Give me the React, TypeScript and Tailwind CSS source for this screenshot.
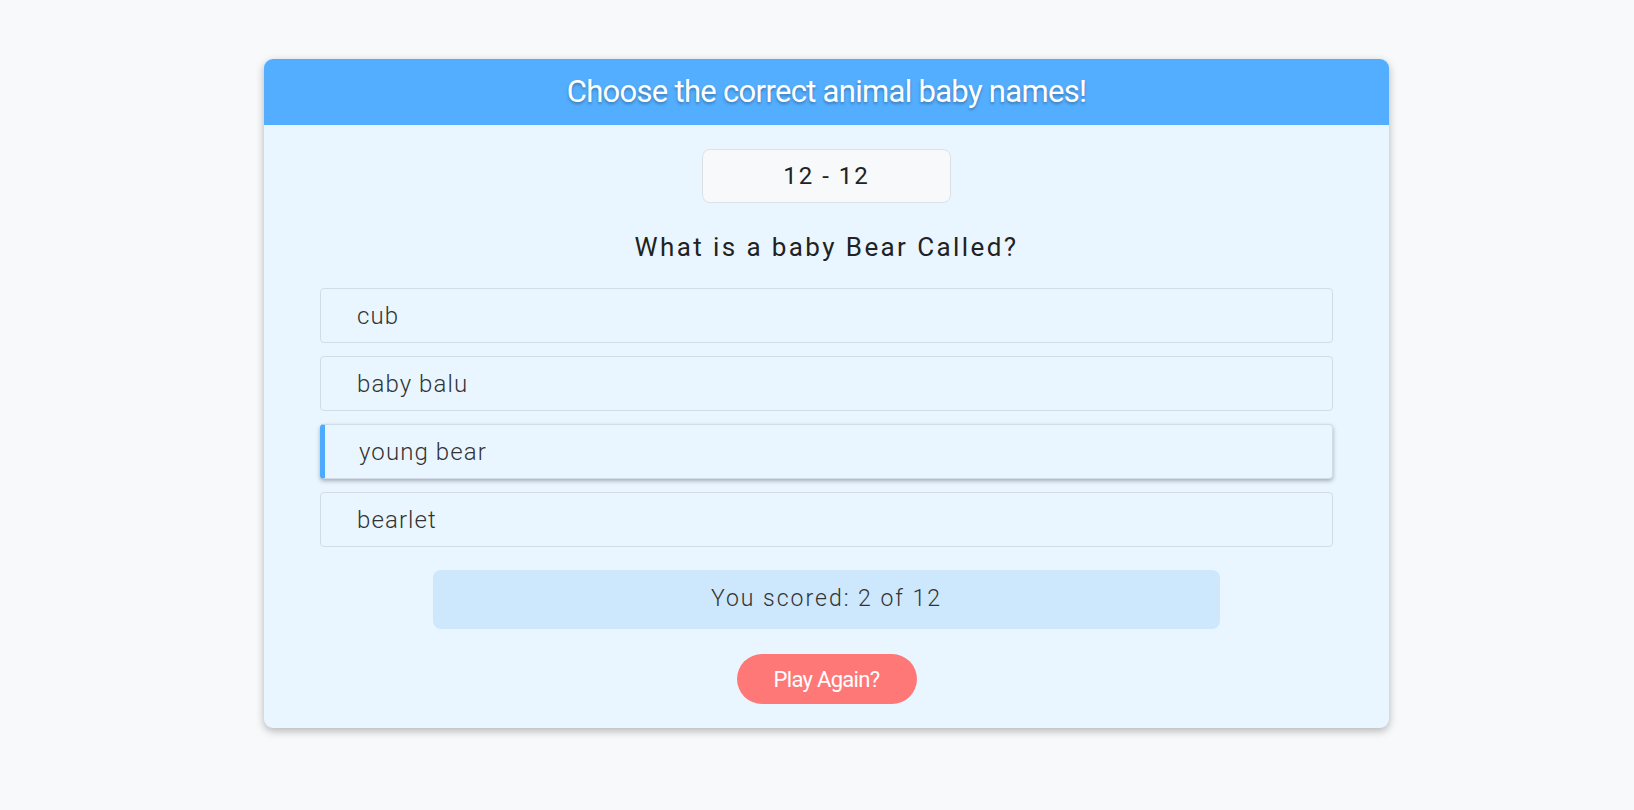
import { useState } from 'react';

const options = ['cub', 'baby balu', 'young bear', 'bearlet'];

export default function App() {
  const [selected, setSelected] = useState(2);

  return (
    <div className="min-h-screen bg-[#f8f9fb] pt-[59px] font-['Roboto',sans-serif]">
      <div className="ml-[264px] w-[1125px] overflow-hidden rounded-[9px] bg-[#eaf6ff] shadow-[0_3px_8px_rgba(0,0,0,0.28)]">
        <div className="flex h-[66px] items-center justify-center bg-[#54aeff]">
          <h1 className="text-[31px] tracking-[-0.7px] text-white [text-shadow:0_2px_3px_rgba(0,0,0,0.3)]">
            Choose the correct animal baby names!
          </h1>
        </div>

        <div className="flex flex-col items-center px-[56px] pb-[24px] pt-[24px]">
          <div className="flex h-[54px] w-[249px] items-center justify-center rounded-[8px] border border-[#dcdfe3] bg-[#f7f9fb] text-[24px] tracking-[2px] text-[#222]">
            12 - 12
          </div>

          <h2 className="mt-[28px] text-[26px] leading-[32px] tracking-[2.4px] text-[#222]">
            What is a baby Bear Called?
          </h2>

          <ul className="mt-[25px] flex w-full flex-col gap-[13px]">
            {options.map((opt, i) => (
              <li
                key={opt}
                onClick={() => setSelected(i)}
                className={
                  i === selected
                    ? 'flex h-[55px] cursor-pointer items-center rounded-[4px] border border-l-[5px] border-[#d3dce6] border-l-[#4eaaff] bg-[#eaf6ff] pl-[34px] text-[24px] font-light tracking-[1.1px] text-[#333] shadow-[0_2px_4px_rgba(0,0,0,0.3)]'
                    : 'flex h-[55px] cursor-pointer items-center rounded-[4px] border border-[#d3dce6] bg-[#eaf6ff] pl-[36px] text-[24px] font-light tracking-[1.1px] text-[#333]'
                }
              >
                {opt}
              </li>
            ))}
          </ul>

          <div className="mt-[23px] flex h-[59px] w-[787px] items-center justify-center rounded-[8px] bg-[#cde7fd] text-[23px] font-light tracking-[2px] text-[#333]">
            You scored: 2 of 12
          </div>

          <button className="mt-[25px] h-[50px] w-[180px] rounded-full bg-[#ff7878] text-[22px] tracking-[-0.7px] text-white">
            Play Again?
          </button>
        </div>
      </div>
    </div>
  );
}
